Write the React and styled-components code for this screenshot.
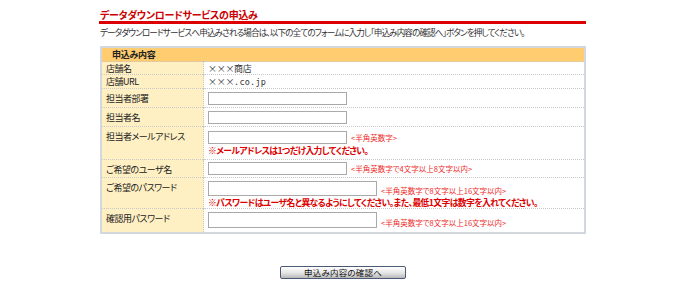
import React from "react";
import styled, { createGlobalStyle } from "styled-components";

const Global = createGlobalStyle`
  html, body { margin: 0; padding: 0; background: #fff; }
  body {
    font-family: "Noto Sans CJK JP", "Noto Sans", sans-serif;
    font-feature-settings: "palt";
    color: #333;
  }
  #root { width: 690px; height: 291px; overflow: hidden; }
`;

const Page = styled.div`
  width: 487px;
  margin-left: 99px;
  padding-top: 9px;
`;

const Title = styled.h1`
  margin: 0;
  padding: 0 0 1px 1px;
  font-size: 10px;
  line-height: 11px;
  font-weight: bold;
  color: #cc0000;
  border-bottom: 3px solid #dd0000;
  letter-spacing: -0.3px;
`;

const Lead = styled.p`
  margin: 2px 0 0 1px;
  font-size: 8.6px;
  line-height: 12px;
  color: #333;
  letter-spacing: -0.9px;
  white-space: nowrap;
`;

const Table = styled.table`
  margin-top: 8px;
  margin-left: 1px;
  width: 486px;
  border-collapse: collapse;
  border: 2px solid #d3d7de;
`;

const HeadCell = styled.th`
  background: #ffcc70;
  height: 13px;
  padding: 0 0 0 10px;
  text-align: left;
  font-size: 9px;
  line-height: 12px;
  font-weight: bold;
  color: #222;
  letter-spacing: -0.3px;
`;

const Row = styled.tr`
  height: ${(p) => p.$h}px;
  border-top: 1px dotted #c9c9c9;
`;

const Label = styled.td`
  width: 97px;
  background: #fff0c4;
  padding: ${(p) => (p.$top ? "4px 0 0 4px" : "0 0 0 4px")};
  vertical-align: ${(p) => (p.$top ? "top" : "middle")};
  font-size: 9px;
  line-height: 11px;
  color: #222;
  letter-spacing: -0.5px;
  border-right: 1px dotted #c9c9c9;
`;

const Value = styled.td`
  padding: ${(p) => p.$pad || "0 0 0 4px"};
  vertical-align: ${(p) => (p.$top ? "top" : "middle")};
  font-size: 9px;
  line-height: 11px;
  color: #333;
  letter-spacing: -0.3px;
`;

const Mono = styled.span`
  font-family: "DejaVu Sans Mono", "Liberation Mono", monospace;
  font-size: 8.5px;
  letter-spacing: 0.2px;
`;

const Line = styled.div`
  display: flex;
  align-items: ${(p) => (p.$bottom ? "flex-end" : "center")};
  gap: 4px;
`;

const Input = styled.input`
  box-sizing: border-box;
  width: ${(p) => p.$w}px;
  height: ${(p) => p.$h || 13}px;
  margin: 0;
  padding: 0;
  border: 1px solid #a9a9a9;
  background: #fff;
`;

const Hint = styled.span`
  font-size: 7.5px;
  line-height: 10px;
  color: #ee2828;
  white-space: nowrap;
  letter-spacing: 0;
  padding-bottom: ${(p) => p.$pb || 0}px;
`;

const Warn = styled.div`
  margin-top: 1px;
  font-size: 8.8px;
  line-height: 11px;
  font-weight: bold;
  color: #dd0000;
  white-space: nowrap;
  letter-spacing: -0.6px;
`;

const ButtonBar = styled.div`
  display: flex;
  justify-content: center;
  margin-top: 32px;
  padding-left: 1px;
`;

const Button = styled.button`
  width: 126px;
  height: 13px;
  padding: 0;
  border: 1px solid #4c5a78;
  border-radius: 2px;
  background: linear-gradient(#ffffff, #e4e4e4 55%, #b8b8b8);
  font-family: "Noto Sans CJK JP", sans-serif;
  font-feature-settings: "palt";
  font-size: 8.5px;
  line-height: 11px;
  color: #111;
  letter-spacing: 0.2px;
`;

export default function App() {
  return (
    <>
      <Global />
      <Page>
        <Title>データダウンロードサービスの申込み</Title>
        <Lead>
          データダウンロードサービスへ申込みされる場合は、以下の全てのフォームに入力し「申込み内容の確認へ」ボタンを押してください。
        </Lead>
        <Table>
          <tbody>
            <tr>
              <HeadCell colSpan={2}>申込み内容</HeadCell>
            </tr>
            <Row $h={13}>
              <Label>店舗名</Label>
              <Value>×××商店</Value>
            </Row>
            <Row $h={14}>
              <Label>店舗URL</Label>
              <Value>
                ×××<Mono>.co.jp</Mono>
              </Value>
            </Row>
            <Row $h={19}>
              <Label>担当者部署</Label>
              <Value>
                <Input $w={139} />
              </Value>
            </Row>
            <Row $h={19}>
              <Label>担当者名</Label>
              <Value>
                <Input $w={139} />
              </Value>
            </Row>
            <Row $h={33}>
              <Label $top>担当者メールアドレス</Label>
              <Value $top $pad="4px 0 0 4px">
                <Line $bottom>
                  <Input $w={139} />
                  <Hint $pb={1}>&lt;半角英数字&gt;</Hint>
                </Line>
                <Warn>※メールアドレスは1つだけ入力してください。</Warn>
              </Value>
            </Row>
            <Row $h={18}>
              <Label $top>ご希望のユーザ名</Label>
              <Value>
                <Line>
                  <Input $w={139} />
                  <Hint>&lt;半角英数字で4文字以上8文字以内&gt;</Hint>
                </Line>
              </Value>
            </Row>
            <Row $h={30}>
              <Label $top>ご希望のパスワード</Label>
              <Value $top $pad="3px 0 0 4px">
                <Line $bottom>
                  <Input $w={169} $h={15} />
                  <Hint>&lt;半角英数字で8文字以上16文字以内&gt;</Hint>
                </Line>
                <Warn>
                  ※パスワードはユーザ名と異なるようにしてください。また、最低1文字は数字を入れてください。
                </Warn>
              </Value>
            </Row>
            <Row $h={24}>
              <Label $top>確認用パスワード</Label>
              <Value $top $pad="3px 0 3px 4px">
                <Line $bottom>
                  <Input $w={169} $h={16} />
                  <Hint>&lt;半角英数字で8文字以上16文字以内&gt;</Hint>
                </Line>
              </Value>
            </Row>
          </tbody>
        </Table>
        <ButtonBar>
          <Button type="button">申込み内容の確認へ</Button>
        </ButtonBar>
      </Page>
    </>
  );
}
